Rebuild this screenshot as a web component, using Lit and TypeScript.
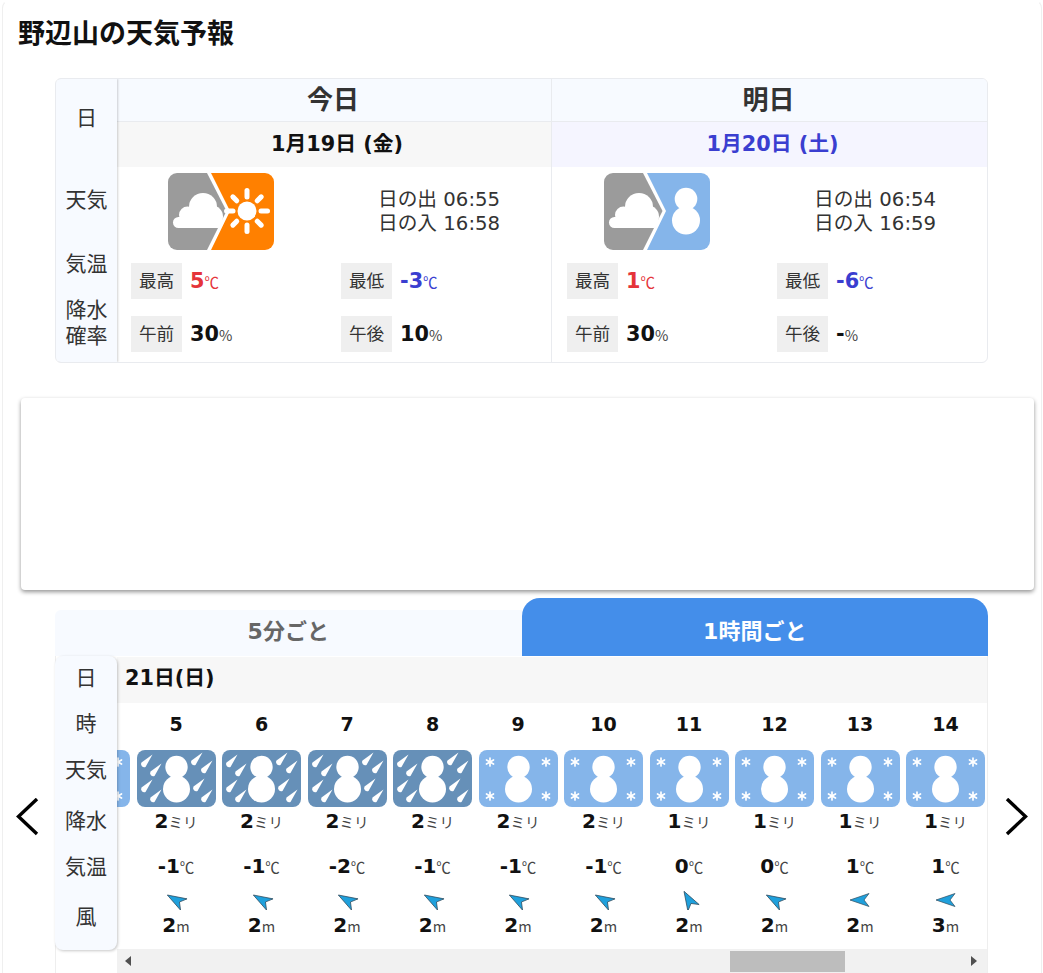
import { LitElement, html, css, svg } from "lit";
import { customElement } from "lit/decorators.js";

const LIGHT = "#85b5ea";
const HEAVY = "#6690b8";

const cloud = svg`<g fill="#fff"><circle cx="35" cy="34" r="14"/><circle cx="19.5" cy="42" r="8.5"/><circle cx="44" cy="43.5" r="11"/><rect x="5" y="44" width="50" height="11" rx="5.5"/></g>`;
const sunRays = [0, 45, 90, 135, 180, 225, 270, 315];
const sun = svg`<g stroke="#fff" stroke-width="5" stroke-linecap="round"><circle cx="79" cy="38" r="9.5" fill="#fff" stroke="none"/>${sunRays.map(
  (a) => svg`<line x1="79" y1="${a % 90 ? 23.5 : 17.5}" x2="79" y2="${a % 90 ? 18 : 24}" transform="rotate(${a} 79 38)"/>`
)}</g>`;
const man = svg`<g fill="#fff"><circle cx="82" cy="26" r="11.3"/><circle cx="82" cy="47.5" r="14"/></g>`;

function dayIcon(kind: "sun" | "snow") {
  const color = kind === "sun" ? "#ff8000" : LIGHT;
  return html`<svg class="day-icon" width="106" height="77" viewBox="0 0 106 77">
    <defs><clipPath id="c-${kind}"><rect width="106" height="77" rx="9"/></clipPath></defs>
    <g clip-path="url(#c-${kind})">
      <polygon points="0,0 39,0 58.5,38 39,77 0,77" fill="#9b9b9b"/>
      <polygon points="43,0 106,0 106,77 43,77 62,38" fill="${color}"/>
    </g>
    ${cloud}${kind === "sun" ? sun : man}
  </svg>`;
}

const flake = (x: number, y: number) =>
  svg`<g transform="translate(${x} ${y})" stroke="#fff" stroke-width="1.7" stroke-linecap="round"><line x1="0" y1="-4" x2="0" y2="4"/><line x1="-3.5" y1="-2" x2="3.5" y2="2"/><line x1="-3.5" y1="2" x2="3.5" y2="-2"/></g>`;
const drop = (x: number, y: number) =>
  svg`<path transform="translate(${x} ${y})" d="M6.5 -7.5 L-4.5 0.5 A3.2 3.2 0 0 0 -0.5 5 Z" fill="#fff"/>`;

function hourIcon(heavy: boolean) {
  const marks = heavy
    ? [[9, 12], [18, 21], [9, 37], [18, 47], [59, 10], [69, 18], [61, 36], [69, 47]].map(([x, y]) => drop(x, y))
    : [[11, 12], [67, 12], [11, 46], [67, 46]].map(([x, y]) => flake(x, y));
  return html`<svg class="hour-icon" width="79" height="57" viewBox="0 0 79 57">
    <rect width="79" height="57" rx="8" fill="${heavy ? HEAVY : LIGHT}"/>
    ${marks}
    <circle cx="39.5" cy="17" r="11.2" fill="#fff"/><circle cx="39.5" cy="39" r="13.5" fill="#fff"/>
  </svg>`;
}

function windArrow(angle: number) {
  return html`<svg class="wind" width="24" height="20" viewBox="-12 -10 24 20">
    <polygon transform="rotate(${angle})" points="-10,0 9,-6.5 4,0 9,6.5" fill="#1fa0dc" stroke="#2f4a5c" stroke-width=".7" stroke-linejoin="round"/>
  </svg>`;
}

type Hour = { h: string; heavy: boolean; rain: string; temp: string; angle: number; wind: string };
const hours: Hour[] = [
  { h: "5", heavy: true, rain: "2", temp: "-1", angle: 30, wind: "2" },
  { h: "6", heavy: true, rain: "2", temp: "-1", angle: 30, wind: "2" },
  { h: "7", heavy: true, rain: "2", temp: "-2", angle: 30, wind: "2" },
  { h: "8", heavy: true, rain: "2", temp: "-1", angle: 30, wind: "2" },
  { h: "9", heavy: false, rain: "2", temp: "-1", angle: 30, wind: "2" },
  { h: "10", heavy: false, rain: "2", temp: "-1", angle: 30, wind: "2" },
  { h: "11", heavy: false, rain: "1", temp: "0", angle: 60, wind: "2" },
  { h: "12", heavy: false, rain: "1", temp: "0", angle: 30, wind: "2" },
  { h: "13", heavy: false, rain: "1", temp: "1", angle: 0, wind: "2" },
  { h: "14", heavy: false, rain: "1", temp: "1", angle: 0, wind: "3" },
];

type Day = {
  title: string; date: string; sat: boolean; icon: "sun" | "snow"; rise: string; set: string;
  hi: string; lo: string; am: string; pm: string;
};
const days: Day[] = [
  { title: "今日", date: "1月19日 (金)", sat: false, icon: "sun", rise: "06:55", set: "16:58", hi: "5", lo: "-3", am: "30", pm: "10" },
  { title: "明日", date: "1月20日 (土)", sat: true, icon: "snow", rise: "06:54", set: "16:59", hi: "1", lo: "-6", am: "30", pm: "-" },
];

@customElement("app-root")
export class AppRoot extends LitElement {
  static styles = css`
    :host {
      display: block;
      height: 973px;
      overflow: hidden;
      background: #fff;
      color: #111;
      font-family: "DejaVu Sans", "Noto Sans CJK JP", sans-serif;
    }
    .card {
      position: relative;
      margin: 0 1px 0 2px;
      height: 1000px;
      border: 1px solid #efefef;
      border-top-color: transparent;
      border-radius: 8px 8px 0 0;
      box-sizing: border-box;
    }
    h1 {
      margin: 0;
      padding-left: 15px;
      height: 65px;
      line-height: 62px;
      font-size: 27px;
      font-weight: 700;
      font-family: "Noto Sans CJK JP", sans-serif;
    }
    .week {
      display: grid;
      grid-template-columns: 61px 434px 1fr;
      margin: 12px 53px 0 52px;
      height: 285px;
      border: 1px solid #e9ebef;
      border-radius: 6px;
      box-sizing: border-box;
      overflow: hidden;
    }
    .side {
      display: grid;
      justify-items: center;
      align-items: center;
      background: #f7faff;
      font-size: 21px;
      color: #333;
      text-align: center;
      line-height: 26px;
      font-family: "Noto Sans CJK JP", sans-serif;
      position: relative;
      z-index: 1;
    }
    .side > div { margin-top: -4px; }
    .week .side {
      grid-template-rows: 77px 88px 40px 78px;
      box-shadow: 1px 0 2px rgba(0, 0, 0, 0.18);
    }
    .day + .day { border-left: 1px solid #e9ebef; }
    .day + .day .day-body { padding-left: 15px; }
    .day-head {
      height: 43px;
      line-height: 38px;
      padding-right: 2px;
      box-sizing: border-box;
      border-bottom: 1px solid #e9ebef;
      background: #f7faff;
      text-align: center;
      font-size: 26px;
      font-weight: 700;
      color: #333;
      font-family: "Noto Sans CJK JP", sans-serif;
    }
    .date {
      height: 45px;
      line-height: 44px;
      padding-left: 6px;
      text-align: center;
      font-size: 20.8px;
      font-weight: 700;
      background: #f7f7f7;
    }
    .date.sat { background: #f5f5ff; color: #3a3ed0; }
    .day-body {
      display: grid;
      grid-template-columns: 210px 210px;
      padding: 6px 0 0 14px;
      row-gap: 17px;
    }
    .weather { display: flex; align-items: center; height: 77px; margin-bottom: -4px; padding-left: 37px; }
    .day-icon, .hour-icon, .wind { display: block; }
    .sun-times { font-size: 19.7px; color: #333; white-space: nowrap; font-weight: 400; margin-top: -4px; }
    .sun-line { height: 24px; line-height: 24px; }
    .sun-line span { font-family: "Noto Sans CJK JP", sans-serif; }
    .stat { display: flex; align-items: center; height: 36px; }
    .chip {
      width: 51px;
      height: 36px;
      line-height: 34px;
      background: #efefef;
      text-align: center;
      font-size: 17.6px;
      color: #333;
      font-family: "Noto Sans CJK JP", sans-serif;
    }
    .val { margin-left: 8px; font-size: 20.8px; font-weight: 700; display: flex; align-items: baseline; }
    .unit { font-size: 14.5px; font-weight: 400; font-family: "Noto Sans CJK JP", sans-serif; color: #444; }
    .red, .red .unit { color: #e5343a; }
    .blue, .blue .unit { color: #3a3ed0; }
    .ad {
      margin: 35px 7px 0 18px;
      height: 192px;
      background: #fff;
      border-radius: 4px;
      box-shadow: 0 2px 4px rgba(0, 0, 0, 0.42);
    }
    .tabs {
      display: grid;
      grid-template-columns: 1fr 1fr;
      align-items: end;
      margin: 8px 53px 0 52px;
      height: 58px;
    }
    .tab {
      text-align: center;
      font-size: 22px;
      font-weight: 700;
    }
    .tab.off { height: 46px; line-height: 44px; background: #f7faff; color: #666; border-radius: 6px 0 0 0; }
    .tab.on { height: 58px; line-height: 68px; background: #448eea; color: #fff; border-radius: 18px 18px 0 0; }
    .hourly {
      display: grid;
      grid-template-columns: 61px 1fr;
      margin: 0 53px 0 52px;
      border-left: 1px solid #eee;
      border-right: 1px solid #eee;
      height: 320px;
      box-sizing: border-box;
      align-items: start;
    }
    .hourly .side {
      grid-template-rows: 44px 48px 44px 58px 34px 66px;
      height: 294px;
      margin-left: -1px;
      border-radius: 8px;
      box-shadow: 1px 1px 3px rgba(0, 0, 0, 0.22);
    }
    .main { min-width: 0; overflow: hidden; }
    .date-row {
      height: 46px;
      margin-top: 1px;
      line-height: 43px;
      padding-left: 8px;
      background: #f7f7f7;
      font-size: 20.8px;
      font-weight: 700;
    }
    .strip { display: flex; margin-left: -69.25px; height: 246px; }
    .col {
      flex: 0 0 85.5px;
      display: flex;
      flex-direction: column;
      align-items: center;
    }
    .col.partial { padding-top: 47px; box-sizing: border-box; }
    .hour { height: 42px; line-height: 42px; font-size: 19px; font-weight: 700; margin-bottom: 5px; }
    .metric { font-size: 20px; font-weight: 700; line-height: 30px; white-space: nowrap; }
    .metric .unit { font-size: 14.5px; }
    .rain { height: 30px; margin-top: -1px; }
    .temp { height: 30px; margin-top: 15px; }
    .wind { margin-top: 9px; }
    .speed { height: 26px; line-height: 26px; margin-top: 2px; }
    .bar {
      display: flex;
      align-items: center;
      height: 24px;
      background: #f1f1f1;
    }
    .tri { width: 0; height: 0; border-style: solid; border-color: transparent; }
    .tri.l { margin-left: 8px; border-width: 5px 6px 5px 0; border-right-color: #505050; }
    .thumb { width: 115px; height: 21px; margin-left: 599px; background: #bdbdbd; }
    .tri.r { margin-left: auto; margin-right: 10px; border-width: 5px 0 5px 6px; border-left-color: #505050; }
    .nav { position: absolute; top: 797px; }
    .nav.prev { left: 12px; }
    .nav.next { right: 11px; }
  `;

  private renderStat(label: string, val: string, unit: string, cls = "") {
    return html`<div class="stat">
      <div class="chip">${label}</div>
      <div class="val ${cls}">${val}<span class="unit">${unit}</span></div>
    </div>`;
  }

  private renderDay(d: Day) {
    return html`<div class="day">
      <div class="day-head">${d.title}</div>
      <div class="date ${d.sat ? "sat" : ""}">${d.date}</div>
      <div class="day-body">
        <div class="weather">${dayIcon(d.icon)}</div>
        <div class="weather">
          <div class="sun-times">
            <div class="sun-line"><span>日の出</span> ${d.rise}</div>
            <div class="sun-line"><span>日の入</span> ${d.set}</div>
          </div>
        </div>
        ${this.renderStat("最高", d.hi, "℃", "red")}
        ${this.renderStat("最低", d.lo, "℃", "blue")}
        ${this.renderStat("午前", d.am, "%")}
        ${this.renderStat("午後", d.pm, "%")}
      </div>
    </div>`;
  }

  render() {
    return html`<div class="card">
      <h1>野辺山の天気予報</h1>
      <section class="week">
        <div class="side">
          <div>日</div>
          <div>天気</div>
          <div>気温</div>
          <div>降水<br />確率</div>
        </div>
        ${days.map((d) => this.renderDay(d))}
      </section>
      <div class="ad"></div>
      <div class="tabs">
        <div class="tab off">5分ごと</div>
        <div class="tab on">1時間ごと</div>
      </div>
      <section class="hourly">
        <div class="side">
          <div>日</div>
          <div>時</div>
          <div>天気</div>
          <div>降水</div>
          <div>気温</div>
          <div>風</div>
        </div>
        <div class="main">
          <div class="date-row">21日(日)</div>
          <div class="strip">
            <div class="col partial">${hourIcon(false)}</div>
            ${hours.map(
              (h) => html`<div class="col">
                <div class="hour">${h.h}</div>
                ${hourIcon(h.heavy)}
                <div class="metric rain">${h.rain}<span class="unit">ミリ</span></div>
                <div class="metric temp">${h.temp}<span class="unit">℃</span></div>
                ${windArrow(h.angle)}
                <div class="metric speed">${h.wind}<span class="unit">m</span></div>
              </div>`
            )}
          </div>
          <div class="bar">
            <span class="tri l"></span>
            <span class="thumb"></span>
            <span class="tri r"></span>
          </div>
        </div>
      </section>
      <svg class="nav prev" width="28" height="40" viewBox="0 0 28 40" fill="none" stroke="#000" stroke-width="3.4">
        <polyline points="22,1 3.5,18.5 22,36" />
      </svg>
      <svg class="nav next" width="28" height="40" viewBox="0 0 28 40" fill="none" stroke="#000" stroke-width="3.4">
        <polyline points="5,1 23.5,18.5 5,36" />
      </svg>
    </div>`;
  }
}
